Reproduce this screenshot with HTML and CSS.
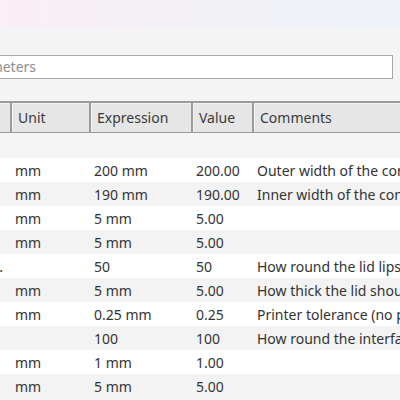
FILE: index.html
```html
<!DOCTYPE html>
<html lang="en">
<head>
  <meta charset="UTF-8">
  <title>Parameters</title>
  <link rel="stylesheet" href="styles.css">
</head>
<body>

  <!-- Kopfleiste -->
  <div class="topbar"></div>

  <div class="panel">
    <div class="search">Search Parameters</div>

    <table class="params">
      <colgroup>
        <col class="c-name">
        <col class="c-unit">
        <col class="c-expr">
        <col class="c-value">
        <col class="c-comment">
      </colgroup>
      <thead>
        <tr>
          <th></th>
          <th>Unit</th>
          <th>Expression</th>
          <th>Value</th>
          <th>Comments</th>
        </tr>
      </thead>
      <tbody>
        <tr class="group"><td></td><td></td><td></td><td></td><td></td></tr>
        <tr><td></td><td>mm</td><td>200 mm</td><td>200.00</td><td>Outer width of the container</td></tr>
        <tr><td></td><td>mm</td><td>190 mm</td><td>190.00</td><td>Inner width of the container</td></tr>
        <tr><td></td><td>mm</td><td>5 mm</td><td>5.00</td><td></td></tr>
        <tr><td></td><td>mm</td><td>5 mm</td><td>5.00</td><td></td></tr>
        <tr><td class="name">.</td><td></td><td>50</td><td>50</td><td>How round the lid lips are</td></tr>
        <tr><td></td><td>mm</td><td>5 mm</td><td>5.00</td><td>How thick the lid should be</td></tr>
        <tr><td></td><td>mm</td><td>0.25 mm</td><td>0.25</td><td>Printer tolerance (no perfect fit)</td></tr>
        <tr><td></td><td></td><td>100</td><td>100</td><td>How round the interface is</td></tr>
        <tr><td></td><td>mm</td><td>1 mm</td><td>1.00</td><td></td></tr>
        <tr><td></td><td>mm</td><td>5 mm</td><td>5.00</td><td></td></tr>
      </tbody>
    </table>
  </div>

</body>
</html>
```

FILE: styles.css
```css
body {
  margin: 0;
  background: #f4f4f4;
  font-family: "Noto Sans", "Open Sans", sans-serif;
  color: #333;
  overflow: hidden;
  width: 400px;
  height: 400px;
}

.topbar {
  height: 28px;
  background: linear-gradient(90deg, #fbeef6, #f3f0f6 40%, #eef3f7);
}

.panel {
  padding-top: 27px;
}

.search {
  box-sizing: border-box;
  margin-left: -95px;
  width: 488px;
  height: 24px;
  border: 1px solid #a9a9a9;
  background: #fff;
  padding-left: 6px;
  font-size: 14px;
  line-height: 22px;
  color: #8c8c8c;
  white-space: nowrap;
  overflow: hidden;
}

.params {
  margin-top: 22px;
  margin-left: -81px;
  border-collapse: collapse;
  table-layout: fixed;
  width: 633px;
  font-size: 14px;
}

.c-name    { width: 91px; }
.c-unit    { width: 79px; }
.c-expr    { width: 102px; }
.c-value   { width: 61px; }
.c-comment { width: 300px; }

.params th {
  height: 29px;
  padding: 0 0 0 6px;
  background: #e6e6e6;
  border: 2px solid #9c9c9c;
  border-bottom-width: 1px;
  box-shadow: inset 1px 1px 0 #f2f2f2;
  font-weight: normal;
  text-align: left;
  color: #3a3a3a;
}

.params td {
  height: 24px;
  padding: 0 0 0 4px;
  white-space: nowrap;
  overflow: hidden;
}

.params tbody tr:nth-child(even) { background: #fff; }
.params tbody tr:nth-child(odd)  { background: #f3f3f3; }

.params tr.group td {
  height: 25px;
  background: #f5f5f5;
}

.params td.name {
  text-align: right;
  padding-right: 8px;
}
```
